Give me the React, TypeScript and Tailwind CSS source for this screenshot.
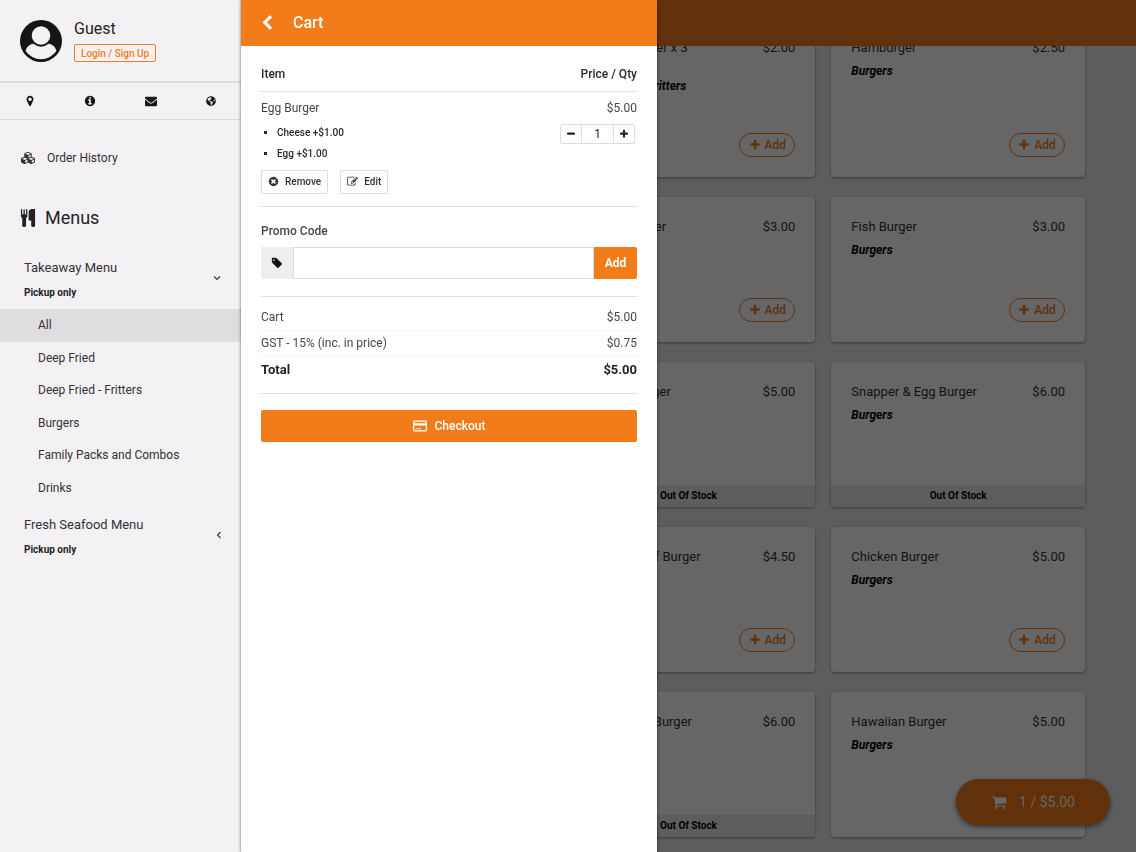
import { FaCubes, FaGlobeAmericas } from "react-icons/fa";

const paths = {
  pin: "M1152 640q0-106-75-181t-181-75-181 75-75 181 75 181 181 75 181-75 75-181zm256 0q0 109-33 179l-364 774q-16 33-47.5 52t-67.5 19-67.5-19-46.5-52l-365-774q-33-70-33-179 0-212 150-362t362-150 362 150 150 362z",
  info: "M1152 1376v-160q0-14-9-23t-23-9h-96v-512q0-14-9-23t-23-9h-320q-14 0-23 9t-9 23v160q0 14 9 23t23 9h96v320h-96q-14 0-23 9t-9 23v160q0 14 9 23t23 9h448q14 0 23-9t9-23zm-128-896v-160q0-14-9-23t-23-9h-192q-14 0-23 9t-9 23v160q0 14 9 23t23 9h192q14 0 23-9t9-23zm640 416q0 209-103 385.5t-279.5 279.5-385.5 103-385.5-103-279.5-279.5-103-385.5 103-385.5 279.5-279.5 385.5-103 385.5 103 279.5 279.5 103 385.5z",
  mail: "M1792 710v794q0 66-47 113t-113 47h-1472q-66 0-113-47t-47-113v-794q44 49 101 87 362 246 497 345 57 42 92.5 65.5t94.5 48 110 24.5h2q51 0 110-24.5t94.5-48 92.5-65.5q170-123 498-345 57-39 100-87zm0-294q0 79-49 151t-122 123q-376 261-468 325-10 7-42.5 31t-54 38.5-52 32.5-57.5 27-50 9h-2q-23 0-50-9t-57.5-27-52-32.5-54-38.5-42.5-31q-91-64-262-182.5t-205-142.5q-62-42-117-115.5t-55-136.5q0-78 41.5-130t118.5-52h1472q65 0 112.5 47t47.5 113z",
  cutlery: "M832 64v640q0 61-35.5 111t-92.5 70v779q0 52-38 90t-90 38h-128q-52 0-90-38t-38-90v-779q-57-20-92.5-70t-35.5-111v-640q0-26 19-45t45-19 45 19 19 45v416q0 26 19 45t45 19 45-19 19-45v-416q0-26 19-45t45-19 45 19 19 45v416q0 26 19 45t45 19 45-19 19-45v-416q0-26 19-45t45-19 45 19 19 45zm768 0v1600q0 52-38 90t-90 38h-128q-52 0-90-38t-38-90v-512h-224q-13 0-22.5-9.5t-9.5-22.5v-800q0-132 94-226t226-94h256q26 0 45 19t19 45z",
  plus: "M1600 736v192q0 40-28 68t-68 28h-416v416q0 40-28 68t-68 28h-192q-40 0-68-28t-28-68v-416h-416q-40 0-68-28t-28-68v-192q0-40 28-68t68-28h416v-416q0-40 28-68t68-28h192q40 0 68 28t28 68v416h416q40 0 68 28t28 68z",
  minus: "M1600 736v192q0 40-28 68t-68 28h-1216q-40 0-68-28t-28-68v-192q0-40 28-68t68-28h1216q40 0 68 28t28 68z",
  remove: "M1277 1122q0-26-19-45l-181-181 181-181q19-19 19-45 0-27-19-46l-90-90q-19-19-46-19-26 0-45 19l-181 181-181-181q-19-19-45-19-27 0-46 19l-90 90q-19 19-19 46 0 26 19 45l181 181-181 181q-19 19-19 45 0 27 19 46l90 90q19 19 46 19 26 0 45-19l181-181 181 181q19 19 45 19 27 0 46-19l90-90q19-19 19-46zm387-226q0 209-103 385.5t-279.5 279.5-385.5 103-385.5-103-279.5-279.5-103-385.5 103-385.5 279.5-279.5 385.5-103 385.5 103 279.5 279.5 103 385.5z",
  edit: "M888 1184l116-116-152-152-116 116v56h96v96h56zm440-720q-16-16-33 1l-350 350q-17 17-1 33t33-1l350-350q17-17 1-33zm80 594v190q0 119-84.5 203.5t-203.5 84.5h-832q-119 0-203.5-84.5t-84.5-203.5v-832q0-119 84.5-203.5t203.5-84.5h832q63 0 117 25 15 7 18 23 3 17-9 29l-49 49q-14 14-32 8-23-6-45-6h-832q-66 0-113 47t-47 113v832q0 66 47 113t113 47h832q66 0 113-47t47-113v-126q0-13 9-22l64-64q15-15 35-7t20 29zm-96-738l288 288-672 672h-288v-288zm444 132l-92 92-288-288 92-92q28-28 68-28t68 28l152 152q28 28 28 68t-28 68z",
  tag: "M576 448q0-53-37.5-90.5t-90.5-37.5-90.5 37.5-37.5 90.5 37.5 90.5 90.5 37.5 90.5-37.5 37.5-90.5zm1067 576q0 53-37 90l-491 492q-39 37-91 37-53 0-90-37l-715-716q-38-37-64.5-101t-26.5-117v-416q0-52 38-90t90-38h416q53 0 117 26.5t102 64.5l715 714q37 39 37 91z",
  cart: "M704 1536q0 52-38 90t-90 38-90-38-38-90 38-90 90-38 90 38 38 90zm896 0q0 52-38 90t-90 38-90-38-38-90 38-90 90-38 90 38 38 90zm128-1088v512q0 24-16.5 42.5t-40.5 21.5l-1044 122q13 60 13 70 0 16-24 64h920q26 0 45 19t19 45-19 45-45 19h-1024q-26 0-45-19t-19-45q0-11 8-31.5t16-36 21.5-40 15.5-29.5l-177-823h-204q-26 0-45-19t-19-45 19-45 45-19h256q16 0 28.5 6.5t19.5 15.5 13 24.5 8 26 5.5 29.5 4.5 26h1201q26 0 45 19t19 45z",
  back: "M1427 301l-531 531 531 531q19 19 19 45t-19 45l-166 166q-19 19-45 19t-45-19l-742-742q-19-19-19-45t19-45l742-742q19-19 45-19t45 19l166 166q19 19 19 45t-19 45z",
};

function Icon({ name, className }: { name: keyof typeof paths; className: string }) {
  return (
    <svg viewBox="0 0 1792 1792" fill="currentColor" aria-hidden="true" className={className}>
      <path d={paths[name]} />
    </svg>
  );
}

function Avatar() {
  return (
    <svg viewBox="0 0 42 42" aria-hidden="true" className="size-[42px] shrink-0">
      <circle cx="21" cy="21" r="21" fill="#151417" />
      <path d="M5.600 31C6.500 27 9.500 24 13.500 23.700Q21 29.800 28.500 23.700C32.500 24 35.500 27 36.400 31A18.600 18.600 0 0 1 5.600 31Z" fill="#f3f1f4" />
      <circle cx="21" cy="15.500" r="9.300" fill="#f3f1f4" />
    </svg>
  );
}

function CardIcon() {
  return (
    <svg viewBox="0 0 14 12" aria-hidden="true" className="h-3 w-3.5">
      <rect x="0.600" y="1.100" width="12.800" height="9.800" rx="1" fill="none" stroke="currentColor" strokeWidth="1.200" />
      <path d="M1 3.200h12v2.400H1zM2.500 8.200h1.700v1H2.500zM5 8.200h2.700v1H5z" fill="currentColor" />
    </svg>
  );
}

type Item = {
  name: string;
  price: string;
  category: string;
  action: "add" | "soldOut" | "none";
  tall?: boolean;
};

const rows: [Item, Item][] = [
  [
    { name: "Seafood Fritter x 3", price: "$2.00", category: "Deep Fried - Fritters", action: "add", tall: true },
    { name: "Hamburger", price: "$2.50", category: "Burgers", action: "add" },
  ],
  [
    { name: "Cheese Burger", price: "$3.00", category: "Burgers", action: "add" },
    { name: "Fish Burger", price: "$3.00", category: "Burgers", action: "add" },
  ],
  [
    { name: "Snapper Burger", price: "$5.00", category: "Burgers", action: "soldOut" },
    { name: "Snapper & Egg Burger", price: "$6.00", category: "Burgers", action: "soldOut" },
  ],
  [
    { name: "Bacon & Beef Burger", price: "$4.50", category: "Burgers", action: "add" },
    { name: "Chicken Burger", price: "$5.00", category: "Burgers", action: "add" },
  ],
  [
    { name: "Steak & Egg Burger", price: "$6.00", category: "Burgers", action: "soldOut" },
    { name: "Hawaiian Burger", price: "$5.00", category: "Burgers", action: "none" },
  ],
];

function ProductCard({ item, place }: { item: Item; place: string }) {
  return (
    <article className={`${place} flex min-h-[145px] flex-col justify-between overflow-hidden rounded bg-white shadow-[0_1px_3px_rgba(0,0,0,0.4)]`}>
      <div className="px-5 pt-5">
        <div className="flex justify-between text-[13px] leading-5 text-[#343236]">
          <h3>{item.name}</h3>
          <span>{item.price}</span>
        </div>
        <p className={`text-xs leading-[26px] font-bold text-black italic ${item.tall ? "pt-[15px]" : ""}`}>{item.category}</p>
      </div>
      {item.action === "soldOut" && (
        <p className="bg-[#ebe9ec] text-center text-[10px] leading-[22px] font-bold text-black">Out Of Stock</p>
      )}
      {item.action === "add" && (
        <div className={`flex justify-end px-5 pb-5 ${item.tall ? "pt-[34px]" : ""}`}>
          <button className="flex h-6 w-14 items-center justify-center gap-1 rounded-full border border-[#f17c19] text-xs font-medium text-[#f17c19]">
            <Icon name="plus" className="size-3" />
            Add
          </button>
        </div>
      )}
    </article>
  );
}

const categories = ["All", "Deep Fried", "Deep Fried - Fritters", "Burgers", "Family Packs and Combos", "Drinks"];

function MenuToggle({ title, open }: { title: string; open: boolean }) {
  return (
    <button aria-expanded={open} className="flex w-full items-start justify-between pr-5 pl-6 text-left">
      <span>
        <span className="block text-[13px] leading-6">{title}</span>
        <span className="block text-[10px] leading-[26px] font-bold text-[#242226]">Pickup only</span>
      </span>
      <svg viewBox="0 0 8 8" aria-hidden="true" className="mt-[18px] size-2">
        <path d={open ? "M1 2.500 4 5.500 7 2.500" : "M7.500 1 4.500 4 7.500 7"} fill="none" stroke="currentColor" strokeWidth="1.100" />
      </svg>
    </button>
  );
}

function Sidebar() {
  return (
    <aside className="relative z-20 h-screen w-[241px] shrink-0 bg-[#f3f1f4] text-[#343236]">
      <div className="flex h-[83px] items-start gap-3 border-b-2 border-[#dddbde] pt-5 pl-5">
        <Avatar />
        <div>
          <p className="text-base leading-[18px] text-[#242226]">Guest</p>
          <a href="#login" className="mt-1.5 flex h-[18px] items-center rounded-xs border border-[#f17c19] px-1.5 text-[10px] font-medium text-[#f17c19]">
            Login / Sign Up
          </a>
        </div>
      </div>
      <nav aria-label="Store details" className="grid h-[37px] grid-cols-4 border-b border-[#dddbde] text-[#151417]">
        <a href="#location" aria-label="Location" className="flex items-center justify-center"><Icon name="pin" className="size-3" /></a>
        <a href="#info" aria-label="Information" className="flex items-center justify-center"><Icon name="info" className="size-3" /></a>
        <a href="#contact" aria-label="Contact" className="flex items-center justify-center"><Icon name="mail" className="size-3" /></a>
        <a href="#website" aria-label="Website" className="flex items-center justify-center"><FaGlobeAmericas className="size-2.5" /></a>
      </nav>
      <a href="#orders" className="mt-7 flex h-5 items-center gap-3 pl-[21px] text-xs">
        <FaCubes className="size-3.5" />
        Order History
      </a>
      <h2 className="mt-9 flex h-7 items-center gap-2 pl-[19px] text-lg text-[#242226]">
        <Icon name="cutlery" className="size-[18px]" />
        Menus
      </h2>
      <div className="mt-6">
        <MenuToggle title="Takeaway Menu" open />
      </div>
      <ul className="mt-[3px] grid h-[195px] auto-rows-fr text-xs">
        {categories.map((name, i) => (
          <li key={name} className={i === 0 ? "bg-[#dfdde0]" : ""}>
            <a href="#category" className="flex h-full items-center pl-[38px]">{name}</a>
          </li>
        ))}
      </ul>
      <div className="mt-[9px]">
        <MenuToggle title="Fresh Seafood Menu" open={false} />
      </div>
    </aside>
  );
}

function CartDrawer() {
  return (
    <section aria-label="Cart" className="fixed inset-y-0 left-[241px] z-20 w-[416px] bg-white text-xs text-[#48464a] shadow-[0_0_3px_rgba(0,0,0,0.6)]">
      <header className="flex h-[46px] items-center gap-[18px] bg-[#f17c19] pl-[18px] text-white">
        <button aria-label="Back"><Icon name="back" className="size-4" /></button>
        <h1 className="text-base font-medium">Cart</h1>
      </header>
      <div className="px-5">
        <table className="mt-[17px] w-full">
          <thead>
            <tr className="h-7 border-b border-[#e0dee1] text-[#2b292d]">
              <th className="pb-1.5 text-left font-medium">Item</th>
              <th className="pb-1.5 text-right font-medium">Price / Qty</th>
            </tr>
          </thead>
          <tbody>
            <tr className="align-top">
              <td className="pt-1.5">
                <p className="leading-5">Egg Burger</p>
                <ul className="list-[square] pt-1 pl-4 text-[10px] leading-[21px] font-medium text-[#2b292d]">
                  <li>Cheese +$1.00</li>
                  <li>Egg +$1.00</li>
                </ul>
              </td>
              <td className="pt-1.5 text-right">
                <p className="leading-5">$5.00</p>
                <div className="mt-1.5 mr-0.5 ml-auto flex h-5 w-[75px] rounded-xs border border-[#dedce0] text-[#242226]">
                  <button aria-label="Decrease quantity" className="flex w-5 items-center justify-center"><Icon name="minus" className="size-2.5" /></button>
                  <input aria-label="Quantity" defaultValue="1" className="min-w-0 flex-1 border-x border-[#dedce0] text-center text-xs" />
                  <button aria-label="Increase quantity" className="flex w-5 items-center justify-center"><Icon name="plus" className="size-2.5" /></button>
                </div>
              </td>
            </tr>
          </tbody>
        </table>
        <div className="mt-1.5 flex gap-3 border-b border-[#e0dee1] pb-3 text-[10px] font-medium text-[#343236]">
          <button className="flex h-6 items-center gap-1.5 rounded-xs border border-[#dedce0] px-1.5"><Icon name="remove" className="size-[11px]" />Remove</button>
          <button className="flex h-6 items-center gap-1.5 rounded-xs border border-[#dedce0] px-1.5"><Icon name="edit" className="size-[11px]" />Edit</button>
        </div>
        <label htmlFor="promo" className="mt-3.5 block leading-5 font-medium">Promo Code</label>
        <div className="mt-1.5 flex h-8">
          <span className="flex w-8 items-center justify-center bg-[#efedf0] text-[#151417]"><Icon name="tag" className="size-3" /></span>
          <input id="promo" className="min-w-0 flex-1 border border-[#dedce0] px-2" />
          <button className="w-[43px] rounded-r-xs bg-[#f17c19] font-bold text-white">Add</button>
        </div>
        <table className="mt-[17px] w-full border-y border-[#e0dee1]">
          <tbody>
            <tr className="h-[34px] border-b border-[#f5f3f6]">
              <th className="pt-2 text-left font-normal">Cart</th>
              <td className="pt-2 text-right">$5.00</td>
            </tr>
            <tr className="h-[25px] border-b border-[#f5f3f6]">
              <th className="text-left font-normal">GST - 15% (inc. in price)</th>
              <td className="text-right">$0.75</td>
            </tr>
            <tr className="h-[38px] text-[13px] text-[#242226]">
              <th className="pb-2 text-left font-bold">Total</th>
              <td className="pb-2 text-right font-bold">$5.00</td>
            </tr>
          </tbody>
        </table>
        <button className="mt-4 flex h-8 w-full items-center justify-center gap-2 rounded-xs bg-[#f17c19] font-medium text-white">
          <CardIcon />
          Checkout
        </button>
      </div>
    </section>
  );
}

export default function App() {
  return (
    <div className="flex h-screen overflow-hidden bg-[#eae8eb] font-[Roboto,sans-serif]">
      <Sidebar />
      <header className="fixed inset-x-0 top-0 h-[46px] bg-[#f17c19]" />
      <main className="min-w-0 flex-1 px-[51px] pt-[18px]">
        <div className="grid grid-cols-3 gap-x-4 gap-y-5">
          {rows.map(([middle, right]) => [
            <ProductCard key={middle.name} item={middle} place="col-start-2" />,
            <ProductCard key={right.name} item={right} place="col-start-3" />,
          ])}
        </div>
      </main>
      <button className="fixed right-[26px] bottom-[27px] flex h-[46px] w-[154px] items-center justify-center gap-3 rounded-full bg-[#f17c19] text-sm text-white shadow-[0_2px_5px_rgba(0,0,0,0.5)]">
        <Icon name="cart" className="size-4" />
        1 / $5.00
      </button>
      <div className="fixed inset-0 z-10 bg-black/60" />
      <CartDrawer />
    </div>
  );
}
